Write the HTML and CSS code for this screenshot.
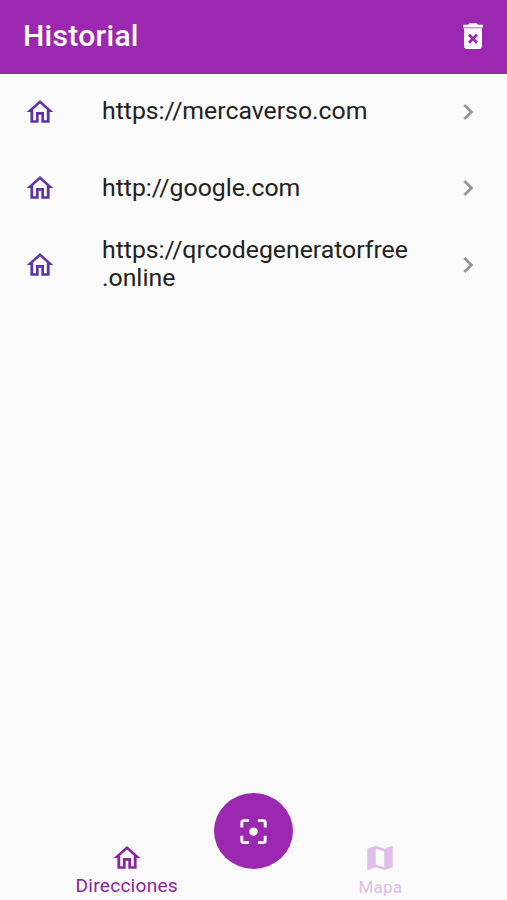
FILE: index.html
```html
<!DOCTYPE html>
<html lang="es">
<head>
<meta charset="utf-8">
<title>Historial</title>
<link rel="stylesheet" href="styles.css">
</head>
<body>
<svg class="defs" width="0" height="0" aria-hidden="true">
<symbol id="home" viewBox="0 0 24 24"><path d="M12 5.65l5.1 4.55V18.1h-2.1v-6.1H9v6.1H6.9v-7.9L12 5.65M12 3L2 12h2.8v8.1h6.2v-6.1h2v6.1h6.2v-8.1H22L12 3z"/></symbol>
<symbol id="chevron" viewBox="0 0 24 24"><path d="M10 6L8.59 7.41 13.17 12l-4.58 4.59L10 18l6-6z"/></symbol>
</svg>
<div class="screen">
<header class="bar">
<h1 class="title">Historial</h1>
<svg class="trash" viewBox="0 0 24 24" preserveAspectRatio="none"><path fill-rule="evenodd" d="M5.7 19c0 1.1.9 2.2 2 2.2h8.6c1.1 0 2-1.1 2-2.2V6.6H5.7V19zM8.46 11.88l1.41-1.41L12 12.59l2.12-2.12 1.41 1.41L13.41 14l2.12 2.12-1.41 1.41L12 15.41l-2.12 2.12-1.41-1.41L10.59 14l-2.13-2.12zM15.5 4l-1-1h-5l-1 1H5v2h14V4z"/></svg>
</header>
<main class="list">
<div class="row"><svg class="home"><use href="#home"/></svg><span class="url">https://mercaverso.com</span><svg class="chevron"><use href="#chevron"/></svg></div>
<div class="row"><svg class="home"><use href="#home"/></svg><span class="url">http://google.com</span><svg class="chevron"><use href="#chevron"/></svg></div>
<div class="row"><svg class="home"><use href="#home"/></svg><span class="url">https://qrcodegeneratorfree<br>.online</span><svg class="chevron"><use href="#chevron"/></svg></div>
</main>
<nav class="nav">
<div class="tab active"><svg class="tab-icon"><use href="#home"/></svg><span class="label">Direcciones</span></div>
<div class="tab"><svg class="tab-icon map" viewBox="0 0 24 24" preserveAspectRatio="none"><path d="M20.5 3l-.16.03L15 5.1 9 3 3.36 4.9c-.21.07-.36.25-.36.48V20.5c0 .28.22.5.5.5l.16-.03L9 18.9l6 2.1 5.64-1.9c.21-.07.36-.25.36-.48V3.5c0-.28-.22-.5-.5-.5zM15 19l-6-2.11V5l6 2.11V19z"/></svg><span class="label small">Mapa</span></div>
<div class="fab"><svg class="scan" viewBox="0 0 24 24" preserveAspectRatio="none"><path d="M5 15H3v4c0 1.1.9 2 2 2h4v-2H5v-4zM5 5h4V3H5c-1.1 0-2 .9-2 2v4h2V5zm14-2h-4v2h4v4h2V5c0-1.1-.9-2-2-2zm0 16h-4v2h4c1.1 0 2-.9 2-2v-4h-2v4zM12 9c-1.66 0-3 1.34-3 3s1.34 3 3 3 3-1.34 3-3-1.34-3-3-3z"/></svg></div>
</nav>
</div>
</body>
</html>
```
FILE: styles.css
```css
body {
  margin: 0;
  background: #fafafa;
  font-family: Roboto, "Liberation Sans", sans-serif;
}
svg {
  display: block;
  flex: none;
  fill: currentColor;
}
.defs {
  position: absolute;
}
.screen {
  height: 900px;
  display: flex;
  flex-direction: column;
  overflow: hidden;
}
.bar {
  box-sizing: border-box;
  height: 74px;
  padding: 0 17px 2px 23px;
  display: flex;
  align-items: center;
  justify-content: space-between;
  background: #9c27b0;
  color: #fff;
}
.title {
  margin: 0;
  font-size: 30px;
  line-height: 34px;
  font-weight: 500;
  letter-spacing: .3px;
}
.trash {
  width: 34px;
  height: 34px;
}
.list {
  flex: 1;
}
.row {
  height: 76.3px;
  display: flex;
  align-items: center;
  padding: 0 23px 0 24px;
}
.home {
  width: 32px;
  height: 32px;
  color: #5e35a6;
}
.url {
  flex: 1;
  margin-left: 46px;
  padding-bottom: 1px;
  font-size: 24.8px;
  line-height: 28.5px;
  white-space: nowrap;
  color: #212121;
}
.chevron {
  width: 32px;
  height: 32px;
  color: #949494;
}
.nav {
  position: relative;
  height: 58px;
  display: flex;
}
.tab {
  flex: 1;
  display: flex;
  flex-direction: column;
  align-items: center;
  color: #dfbfe5;
}
.active {
  color: #8b249f;
}
.tab-icon {
  width: 32px;
  height: 32px;
}
.map {
  width: 34px;
}
.label {
  margin-top: 1px;
  font-size: 19.2px;
  line-height: 22px;
  letter-spacing: .2px;
}
.small {
  margin-top: 2px;
  font-size: 17px;
}
.fab {
  position: absolute;
  left: 214.4px;
  top: -49px;
  width: 79px;
  height: 76px;
  border-radius: 50%;
  background: #9c27b0;
  color: #fff;
  display: flex;
  align-items: center;
  justify-content: center;
}
.scan {
  width: 35px;
  height: 33px;
}
```
